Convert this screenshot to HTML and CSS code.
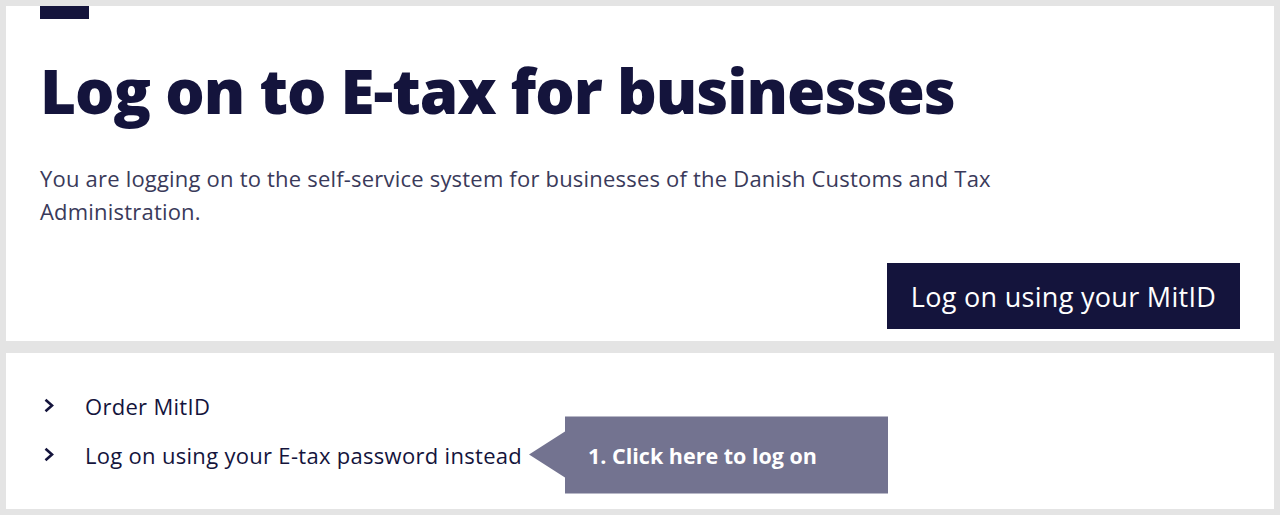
FILE: index.html
```html
<!DOCTYPE html>
<html lang="en">
<head>
<meta charset="utf-8">
<title>Log on to E-tax for businesses</title>
<link rel="stylesheet" href="styles.css">
</head>
<body>
<main class="page">
  <section class="panel panel-top">
    <div class="accent"></div>
    <h1 class="title">Log on to E-tax for businesses</h1>
    <p class="intro">You are logging on to the self-service system for businesses of the Danish Customs and Tax Administration.</p>
    <div class="actions">
      <a class="btn-primary" href="#">Log on using your MitID</a>
    </div>
  </section>
  <section class="panel panel-bottom">
    <ul class="links">
      <li class="link-item">
        <svg class="chev" viewBox="0 0 12 15" width="12" height="15"><path d="M2.5 1.8 L9 7.5 L2.5 13.2" fill="none" stroke="#14143c" stroke-width="2.6"/></svg>
        <a href="#">Order MitID</a>
      </li>
      <li class="link-item">
        <svg class="chev" viewBox="0 0 12 15" width="12" height="15"><path d="M2.5 1.8 L9 7.5 L2.5 13.2" fill="none" stroke="#14143c" stroke-width="2.6"/></svg>
        <a href="#">Log on using your E-tax password instead</a>
        <div class="callout"><span>1. Click here to log on</span></div>
      </li>
    </ul>
  </section>
</main>
</body>
</html>
```

FILE: styles.css
```css
html, body {
  margin: 0;
  padding: 0;
  background: #e4e4e4;
}
body {
  font-family: "Open Sans", "Noto Sans", sans-serif;
  color: #14143c;
}
.page {
  padding: 6px;
  display: flex;
  flex-direction: column;
  gap: 12px;
  height: 515px;
  box-sizing: border-box;
}
.panel {
  background: #ffffff;
  padding: 0 34px;
}
.panel-top {
  height: 335px;
  box-sizing: border-box;
}
.accent {
  width: 49px;
  height: 13px;
  background: #14143c;
}
.title {
  margin: 36px 0 0 0;
  font-size: 62px;
  line-height: 70px;
  font-weight: 800;
  letter-spacing: -1px;
}
.intro {
  margin: 37px 0 0 0;
  font-size: 22px;
  line-height: 33px;
  letter-spacing: 0.2px;
  color: #3a3a5a;
  max-width: 970px;
}
.actions {
  display: flex;
  justify-content: flex-end;
  margin-top: 35px;
}
.btn-primary {
  display: flex;
  align-items: center;
  justify-content: center;
  width: 353px;
  height: 66px;
  background: #14143c;
  color: #ffffff;
  font-size: 27px;
  letter-spacing: 0.3px;
  text-decoration: none;
}
.panel-bottom {
  flex: 1;
}
.links {
  list-style: none;
  margin: 0;
  padding: 28px 0 0 3px;
}
.link-item {
  display: flex;
  align-items: center;
  height: 49px;
  position: relative;
}
.chev {
  margin-right: 30px;
}
.link-item a {
  color: #14143c;
  text-decoration: none;
  font-size: 22px;
  letter-spacing: 0.3px;
}
.callout {
  position: absolute;
  left: 486px;
  top: 50%;
  transform: translateY(-50%);
  width: 359px;
  height: 77px;
  display: flex;
  align-items: center;
}
.callout::before {
  content: "";
  width: 0;
  height: 0;
  border-top: 23px solid transparent;
  border-bottom: 23px solid transparent;
  border-right: 36px solid #737390;
}
.callout span {
  flex: 1;
  align-self: stretch;
  background: #737390;
  color: #ffffff;
  font-weight: 700;
  font-size: 21.5px;
  display: flex;
  align-items: center;
  padding-left: 23px;
}
```
